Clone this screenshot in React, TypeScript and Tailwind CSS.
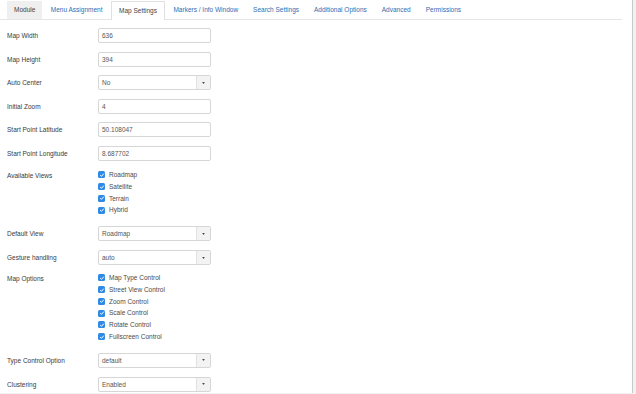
import React from 'react';

const TABS = [
  'Module',
  'Menu Assignment',
  'Map Settings',
  'Markers / Info Window',
  'Search Settings',
  'Additional Options',
  'Advanced',
  'Permissions',
];

type Row =
  | { kind: 'input'; label: string; value: string; mt: string }
  | { kind: 'select'; label: string; value: string; mt: string }
  | { kind: 'checks'; label: string; items: string[]; mt: string };

const ROWS: Row[] = [
  { kind: 'input', label: 'Map Width', value: '636', mt: 'mt-[8px]' },
  { kind: 'input', label: 'Map Height', value: '394', mt: 'mt-[9px]' },
  { kind: 'select', label: 'Auto Center', value: 'No', mt: 'mt-[8px]' },
  { kind: 'input', label: 'Initial Zoom', value: '4', mt: 'mt-[9px]' },
  { kind: 'input', label: 'Start Point Latitude', value: '50.108047', mt: 'mt-[8px]' },
  { kind: 'input', label: 'Start Point Longitude', value: '8.687702', mt: 'mt-[9px]' },
  {
    kind: 'checks',
    label: 'Available Views',
    items: ['Roadmap', 'Satellite', 'Terrain', 'Hybrid'],
    mt: 'mt-[8px]',
  },
  { kind: 'select', label: 'Default View', value: 'Roadmap', mt: 'mt-[10px]' },
  { kind: 'select', label: 'Gesture handling', value: 'auto', mt: 'mt-[9px]' },
  {
    kind: 'checks',
    label: 'Map Options',
    items: [
      'Map Type Control',
      'Street View Control',
      'Zoom Control',
      'Scale Control',
      'Rotate Control',
      'Fullscreen Control',
    ],
    mt: 'mt-[7px]',
  },
  { kind: 'select', label: 'Type Control Option', value: 'default', mt: 'mt-[10px]' },
  { kind: 'select', label: 'Clustering', value: 'Enabled', mt: 'mt-[9px]' },
];

function Checkbox() {
  return (
    <span className="flex h-[7px] w-[7px] items-center justify-center rounded-[1.5px] bg-[#2f8ae5]">
      <svg viewBox="0 0 8 8" className="h-[6px] w-[6px]">
        <path d="M1.6 4.2 L3.3 5.8 L6.4 2.2" fill="none" stroke="#fff" strokeWidth="1.3" />
      </svg>
    </span>
  );
}

function FormRow({ row }: { row: Row }) {
  if (row.kind === 'checks') {
    return (
      <div className={`flex items-start ${row.mt}`}>
        <div className="w-[91px] pt-[1px] leading-[11.75px] text-[#3a3a3a]">{row.label}</div>
        <div className="flex flex-col">
          {row.items.map((item) => (
            <div key={item} className="flex h-[11.75px] items-center gap-[4px] text-[#4a4a4a]">
              <Checkbox />
              <span>{item}</span>
            </div>
          ))}
        </div>
      </div>
    );
  }

  return (
    <div className={`flex items-center ${row.mt}`}>
      <div className="w-[91px] pt-[1px] text-[#3a3a3a]">{row.label}</div>
      {row.kind === 'input' ? (
        <div className="flex h-[15px] w-[113px] items-center rounded-[2px] border border-[#d6d6d6] bg-white px-[3px] pt-[1px] text-[#555]">
          {row.value}
        </div>
      ) : (
        <div className="flex h-[15px] w-[113px] items-stretch rounded-[2px] border border-[#d6d6d6] bg-white text-[#555]">
          <div className="flex flex-1 items-center px-[3px] pt-[1px]">{row.value}</div>
          <div className="flex w-[14px] items-center justify-center border-l border-[#e2e2e2] bg-[#f3f3f3]">
            <svg viewBox="0 0 4 3" className="h-[2px] w-[3px]">
              <path d="M0 0 L4 0 L2 3 Z" fill="#444" />
            </svg>
          </div>
        </div>
      )}
    </div>
  );
}

export default function App() {
  return (
    <div className="flex h-[394px] w-[636px] overflow-hidden bg-[#f1f1f1] font-['Liberation_Sans',Arial,sans-serif] text-[6.5px]">
      <div className="h-[393px] w-[633px] border-r border-[#c9c9c9] bg-white">
        {/* Tabs */}
        <div className="mr-[10px] flex h-[20px] items-end gap-[2px] border-b border-[#e6e6e6] pl-[7px]">
          {TABS.map((tab) => {
            if (tab === 'Module') {
              return (
                <div key={tab} className="flex h-[18px] items-center bg-[#efefef] px-[7px] text-[#444]">
                  {tab}
                </div>
              );
            }
            if (tab === 'Map Settings') {
              return (
                <div
                  key={tab}
                  className="-mb-px flex h-[19px] items-center border border-b-0 border-[#e0e0e0] bg-white px-[7px] text-[#444]"
                >
                  {tab}
                </div>
              );
            }
            return (
              <div key={tab} className="flex h-[18px] items-center px-[6.5px] text-[#2e6db3]">
                {tab}
              </div>
            );
          })}
        </div>

        {/* Form */}
        <div className="flex flex-col pl-[7px]">
          {ROWS.map((row) => (
            <FormRow key={row.label} row={row} />
          ))}
        </div>
      </div>
    </div>
  );
}
